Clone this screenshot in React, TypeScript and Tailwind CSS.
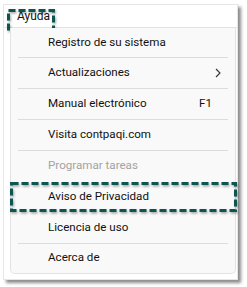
import React from "react";

const font = { fontFamily: 'Roboto, "Noto Sans", sans-serif' };

function DashBox({ w, h }: { w: number; h: number }) {
  return (
    <svg width={w + 6} height={h + 6} className="block" style={{ overflow: "visible" }}>
      <defs>
        <filter id={`sh${w}`} x="-10%" y="-30%" width="120%" height="160%">
          <feDropShadow dx="1" dy="1.5" stdDeviation="1" floodColor="#000" floodOpacity="0.35" />
        </filter>
      </defs>
      <rect
        x={1.5}
        y={1.5}
        width={w - 3}
        height={h - 3}
        fill="none"
        stroke="#0d5550"
        strokeWidth={3}
        strokeDasharray="7 3"
        filter={`url(#sh${w})`}
      />
    </svg>
  );
}

function Sep() {
  return <div className="mx-[7px] h-px bg-[#dcdcdc]" />;
}

function Item({
  label,
  right,
  disabled,
  h = 30,
}: {
  label: string;
  right?: React.ReactNode;
  disabled?: boolean;
  h?: number;
}) {
  return (
    <div
      className={`flex items-center pl-[37px] pr-[16px] text-[11.6px] ${disabled ? "text-[#a3a3a3]" : "text-[#111111]"}`}
      style={{ height: h }}
    >
      <span className="flex-1">{label}</span>
      {right}
    </div>
  );
}

export default function App() {
  return (
    <div className="w-[247px] h-[287px] bg-white relative overflow-hidden" style={font}>
      <div className="ml-[3px] pt-[4px]">
        <div className="w-[235px] h-[276px] bg-white border border-[#e6e6e6] shadow-[3px_3px_3px_rgba(0,0,0,0.45)] flex flex-col">
          <div className="h-[23px] border-b border-[#e3e3e3] relative flex items-center pl-[13px] text-[12px] text-[#111111]">
            <span className="leading-none">Ayuda</span>
            <div className="absolute left-[3px] top-[4px]">
              <DashBox w={48} h={23} />
            </div>
          </div>
          <div className="ml-[6px] w-[226px] h-[246px] bg-[#f9f9f9] border-x border-b border-[#e3e3e3] rounded-b-[5px] relative">
            <Item label="Registro de su sistema" h={29} />
            <Sep />
            <Item
              label="Actualizaciones"
              right={
                <svg width="6" height="10" viewBox="0 0 6 10" className="mr-[-2px]">
                  <path d="M1 1 L5 5 L1 9" fill="none" stroke="#333" strokeWidth="1.1" />
                </svg>
              }
            />
            <Sep />
            <Item label="Manual electrónico" right={<span className="mr-[7px]">F1</span>} />
            <Sep />
            <Item label="Visita contpaqi.com" />
            <Sep />
            <Item label="Programar tareas" disabled />
            <div className="h-px" />
            <Item label="Aviso de Privacidad" />
            <div className="h-px" />
            <Item label="Licencia de uso" />
            <Sep />
            <Item label="Acerca de" h={28} />
            <div className="absolute left-[-1px] top-[154px]">
              <DashBox w={227} h={30} />
            </div>
          </div>
        </div>
      </div>
    </div>
  );
}
